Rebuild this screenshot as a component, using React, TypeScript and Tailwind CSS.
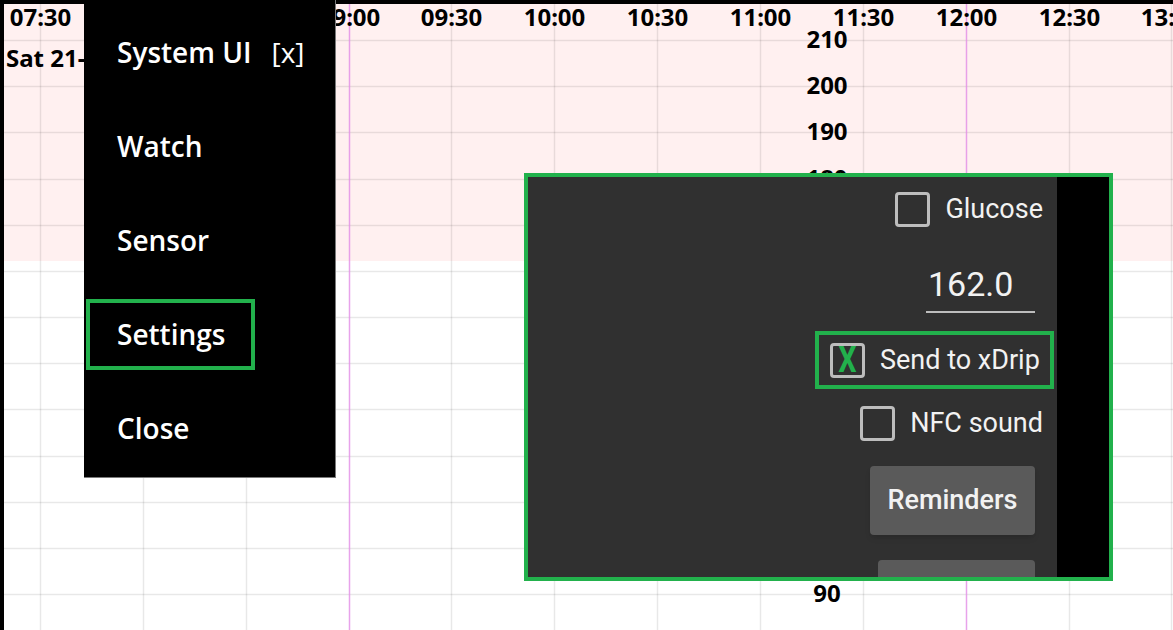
import React from 'react';

const times = ['07:30', '08:00', '08:30', '09:00', '09:30', '10:00', '10:30', '11:00', '11:30', '12:00', '12:30', '13:00'];
const values = [210, 200, 190, 180, 170, 160, 150, 140, 130, 120, 110, 100, 90];

const colX = (i: number) => Math.round(40 + i * 102.85) + 0.5;
const rowY = (i: number) => Math.round(40 + i * 46.17) + 0.5;

function Chart() {
  return (
    <svg className="absolute inset-0" width={1173} height={630}>
      <rect x={0} y={0} width={1173} height={261} fill="#fff0f0" />
      {values.map((v, i) => (
        <line key={v} x1={0} x2={1173} y1={rowY(i)} y2={rowY(i)} stroke="#000" strokeOpacity={0.09} strokeWidth={1.5} />
      ))}
      {times.map((t, i) => (
        <line
          key={t}
          x1={colX(i)}
          x2={colX(i)}
          y1={0}
          y2={630}
          stroke={i === 3 || i === 9 ? '#e28ce6' : '#000'}
          strokeOpacity={i === 3 || i === 9 ? 0.8 : 0.09}
          strokeWidth={1.5}
        />
      ))}
      <g fontFamily="'Noto Sans', sans-serif" fontWeight={700} fontSize={24} fill="#000">
        {times.map((t, i) => (
          <text key={t} x={colX(i)} y={16} textAnchor="middle" dominantBaseline="central">
            {t}
          </text>
        ))}
        <text x={6} y={57} dominantBaseline="central">
          Sat 21-09
        </text>
        {values.map((v, i) => (
          <text key={v} x={827} y={rowY(i) - 2} textAnchor="middle" dominantBaseline="central">
            {v}
          </text>
        ))}
      </g>
      <rect x={0} y={0} width={1173} height={4} fill="#000" />
      <rect x={0} y={0} width={4} height={630} fill="#000" />
    </svg>
  );
}

function Menu() {
  const item = 'flex h-[94px] shrink-0 items-center';
  return (
    <div
      className="absolute left-[84px] top-0 flex h-[478px] w-[252px] flex-col border-b border-r border-[#7a7a7a] bg-black pt-[5px] text-[28px] font-semibold text-white"
      style={{ fontFamily: "'Open Sans', 'Noto Sans', sans-serif" }}
    >
      <div className={`${item} pl-[33px]`}>
        <span>System UI</span>
        <span className="ml-[20px] font-normal">[x]</span>
      </div>
      <div className={`${item} pl-[33px]`}>Watch</div>
      <div className={`${item} pl-[33px]`}>Sensor</div>
      <div className={item}>
        <div className="ml-[2px] flex h-[71px] w-[169px] items-center border-4 border-[#22b14c] pl-[27px]">Settings</div>
      </div>
      <div className={`${item} pl-[33px]`}>Close</div>
    </div>
  );
}

function Box({ checked }: { checked?: boolean }) {
  return (
    <div className="flex h-[35px] w-[35px] shrink-0 items-center justify-center rounded-[4px] border-[3px] border-[#bdbdbd]">
      {checked && <span className="scale-x-[0.8] text-[36px] font-bold leading-none text-[#22b14c]">X</span>}
    </div>
  );
}

function Settings() {
  return (
    <div
      className="absolute left-[524px] top-[173px] flex h-[408px] w-[589px] overflow-hidden border-4 border-[#22b14c] text-[27px] text-[#f2f2f2]"
      style={{ fontFamily: 'Roboto, sans-serif' }}
    >
      <div className="flex flex-1 flex-col items-end overflow-hidden bg-[#303030] pr-[14px]">
        <div className="mt-[14px] flex h-[36px] shrink-0 items-center gap-[15px]">
          <Box />
          <span>Glucose</span>
        </div>
        <div className="mr-[8px] mt-[35px] w-[109px] shrink-0 border-b-2 border-[#bdbdbd] pb-[5px] pl-[2px] text-[34px] leading-[44px]">
          162.0
        </div>
        <div className="mr-[-11px] mt-[18px] flex h-[58px] w-[239px] shrink-0 items-center gap-[15px] border-4 border-[#22b14c] pl-[11px]">
          <Box checked />
          <span>Send to xDrip</span>
        </div>
        <div className="mt-[16px] flex h-[36px] shrink-0 items-center gap-[15px]">
          <Box />
          <span>NFC sound</span>
        </div>
        <div className="mr-[8px] mt-[25px] flex h-[69px] w-[165px] shrink-0 items-center justify-center rounded-[4px] bg-[#5a5a5a] font-medium shadow-md">
          Reminders
        </div>
        <div className="mr-[8px] mt-[25px] h-[69px] w-[157px] shrink-0 rounded-[4px] bg-[#5a5a5a]" />
      </div>
      <div className="w-[52px] shrink-0 bg-black" />
    </div>
  );
}

export default function App() {
  return (
    <div className="relative h-[630px] w-[1173px] overflow-hidden bg-white">
      <Chart />
      <Menu />
      <Settings />
    </div>
  );
}
